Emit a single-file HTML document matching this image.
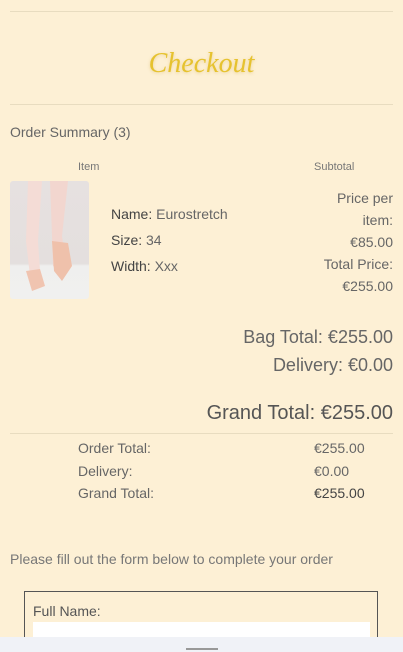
<!DOCTYPE html>
<html style="overflow:hidden;height:652px"><head><style>
body{margin:0;width:403px;height:652px;overflow:hidden;background:#fdf0d5;font-family:"Liberation Sans",sans-serif;color:#5a5a55;position:relative}
.a{position:absolute;white-space:nowrap}
.hr{position:absolute;left:10px;width:383px;height:1px;background:#e8dcc0}
.r{right:10px;text-align:right}
b{font-weight:normal;color:#444}
</style></head><body>
<div class="hr" style="top:11px"></div>
<div class="a" style="left:0;width:403px;text-align:center;top:48px;font-family:'Liberation Serif',serif;font-style:italic;font-size:28px;color:#e6c22f;text-shadow:0 1px 3px rgba(200,160,40,.35)">Checkout</div>
<div class="hr" style="top:104px"></div>
<div class="a" style="left:10px;top:124px;font-size:14px;color:#666">Order Summary (3)</div>
<div class="a" style="left:78px;top:161px;font-size:11px;color:#777">Item</div>
<div class="a" style="left:314px;top:161px;font-size:11px;color:#777">Subtotal</div>
<div class="a" style="left:10px;top:181px;width:79px;height:118px;border-radius:3px;background:linear-gradient(#e6e1e0 0,#e4dfde 70%,#efefee 72%,#f0f0ef 100%);overflow:hidden">
<svg width="79" height="118"><path d="M18 0 L32 0 L28 60 L30 90 L20 95 L16 60Z" fill="#f4dcd6"/><path d="M40 0 L58 0 L52 55 L55 75 L50 90 L43 85 L42 55Z" fill="#f2d6cf"/><path d="M16 90 L30 88 L35 105 L22 110 Z" fill="#f0c4b0"/><path d="M42 60 L58 62 L62 85 L52 100 L44 90Z" fill="#efc1ab"/></svg></div>
<div class="a" style="left:111px;top:206px;font-size:14px;color:#666"><b>Name:</b> Eurostretch</div>
<div class="a" style="left:111px;top:232px;font-size:14px;color:#666"><b>Size:</b> 34</div>
<div class="a" style="left:111px;top:258px;font-size:14px;color:#666"><b>Width:</b> Xxx</div>
<div class="a r" style="top:187px;font-size:14px;line-height:22px;color:#666">Price per<br>item:<br>€85.00<br>Total Price:<br>€255.00</div>
<div class="a r" style="top:327px;font-size:18px;color:#666">Bag Total: €255.00</div>
<div class="a r" style="top:355px;font-size:18px;color:#666">Delivery: €0.00</div>
<div class="a r" style="top:402px;font-size:20px;color:#555">Grand Total: €255.00</div>
<div class="hr" style="top:433px"></div>
<div class="a" style="left:78px;top:437px;font-size:14px;line-height:22.5px;color:#666">Order Total:<br>Delivery:<br>Grand Total:</div>
<div class="a" style="left:314px;top:437px;font-size:14px;line-height:22.5px;color:#666">€255.00<br>€0.00<br><b>€255.00</b></div>
<div class="a" style="left:10px;top:551px;font-size:14px;color:#777">Please fill out the form below to complete your order</div>
<div class="a" style="left:24px;top:591px;width:352px;height:55px;border:1px solid #555;border-bottom:none"></div>
<div class="a" style="left:33px;top:603px;font-size:14px;color:#555">Full Name:</div>
<div class="a" style="left:33px;top:622px;width:337px;height:15px;background:#fff"></div>
<div class="a" style="left:0;top:637px;width:403px;height:15px;background:#f0f2f7"></div>
<div class="a" style="left:186px;top:648px;width:32px;height:2px;background:#999"></div>
</body></html>
